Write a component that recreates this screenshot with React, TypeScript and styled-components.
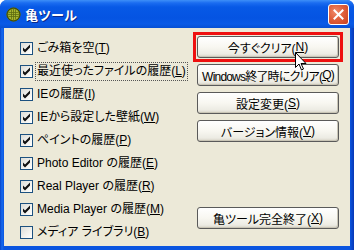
import React from "react";
import styled, { createGlobalStyle, css } from "styled-components";

const Global = createGlobalStyle`
  html, body { margin: 0; padding: 0; background: #ffffff; }
  body { font-family: "Liberation Sans", "Noto Sans CJK JP", sans-serif; }
`;

const Window = styled.div`
  position: relative;
  width: 354px;
  height: 250px;
  display: flex;
  flex-direction: column;
  background: linear-gradient(90deg, #0843c8 0px, #166aee 2px, #0a55e0 4px, #0a55e0 calc(100% - 4px), #0837b5 100%);
  border-radius: 7px 7px 0 0;
  overflow: hidden;
`;

const TitleBar = styled.div`
  height: 28px;
  flex: none;
  display: flex;
  align-items: center;
  padding: 0 5px 0 6px;
  background: linear-gradient(180deg, #3d8ff8 0px, #1a6cf0 3px, #0759e6 7px, #0554e2 18px, #0a5ae6 24px, #0650d4 28px);
  box-sizing: border-box;
`;

const AppIcon = styled.svg`
  width: 15px;
  height: 15px;
  flex: none;
`;

const Title = styled.span`
  margin-left: 4px;
  color: #ffffff;
  font-family: "Noto Sans CJK JP", sans-serif;
  font-weight: 700;
  font-size: 13px;
  text-shadow: 1px 1px 0 #0a2a8a;
  flex: 1;
`;

const CloseButton = styled.div`
  width: 21px;
  height: 21px;
  box-sizing: border-box;
  border: 1px solid #ffffff;
  border-radius: 3px;
  background: radial-gradient(circle at 35% 35%, #f08a6a 0%, #e0603c 45%, #c8401e 100%);
  display: flex;
  align-items: center;
  justify-content: center;
`;

const Client = styled.div`
  flex: 1;
  margin: 0 4px 4px;
  background: #ece9d8;
  display: flex;
`;

const LeftColumn = styled.div`
  width: 177px;
  padding: 9px 0 0 16px;
  display: flex;
  flex-direction: column;
`;

const RightColumn = styled.div`
  width: 142px;
  padding: 8px 0 17px 0;
  display: flex;
  flex-direction: column;
  gap: 6px;
`;

const Row = styled.label`
  height: 23px;
  display: flex;
  align-items: center;
  white-space: nowrap;
`;

const Box = styled.span`
  width: 13px;
  height: 13px;
  box-sizing: border-box;
  border: 1px solid #1c5180;
  background: linear-gradient(135deg, #dcdcd7 0%, #f3f3ef 60%, #ffffff 100%);
  display: flex;
  align-items: center;
  justify-content: center;
  flex: none;
`;

const Label = styled.span<{ $focused?: boolean }>`
  margin-left: 2px;
  padding: 1px 1px;
  font-size: 12px;
  line-height: 15px;
  color: #000000;
  font-feature-settings: "palt";
  border: 1px dotted transparent;
  ${(p) =>
    p.$focused &&
    css`
      border-color: #555555;
    `}
`;

const Key = styled.span`
  text-decoration: underline;
`;

const Button = styled.div<{ $highlighted?: boolean; $bottom?: boolean; $tight?: boolean }>`
  position: relative;
  height: 22px;
  box-sizing: border-box;
  border: 1px solid #5a5a5a;
  border-radius: 3px;
  background: linear-gradient(180deg, #ffffff 0%, #f8f7f1 50%, #ecebe3 85%, #d6d2c5 100%);
  box-shadow: inset -1px -1px 0 #c9c5b6;
  display: flex;
  align-items: center;
  justify-content: center;
  font-size: 12px;
  color: #000000;
  font-feature-settings: "palt";
  white-space: nowrap;
  ${(p) =>
    p.$tight &&
    css`
      letter-spacing: -0.8px;
    `}
  ${(p) =>
    p.$highlighted &&
    css`
      &::after {
        content: "";
        position: absolute;
        inset: -5px;
        border: 3px solid #ee1010;
      }
    `}
  ${(p) =>
    p.$bottom &&
    css`
      margin-top: auto;
    `}
`;

const Cursor = styled.svg`
  position: absolute;
  left: 295px;
  top: 52px;
  width: 12px;
  height: 19px;
`;

const items = [
  { label: "ごみ箱を空", key: "T", checked: true },
  { label: "最近使ったファイルの履歴", key: "L", checked: true, focused: true },
  { label: "IEの履歴", key: "I", checked: true },
  { label: "IEから設定した壁紙", key: "W", checked: true },
  { label: "ペイントの履歴", key: "P", checked: true },
  { label: "Photo Editor の履歴", key: "E", checked: true },
  { label: "Real Player の履歴", key: "R", checked: true },
  { label: "Media Player の履歴", key: "M", checked: true },
  { label: "メディア ライブラリ", key: "B", checked: false },
];

const buttons = [
  { label: "今すぐクリア", key: "N", highlighted: true },
  { label: "Windows終了時にクリア", key: "Q", tight: true },
  { label: "設定変更", key: "S" },
  { label: "バージョン情報", key: "V" },
  { label: "亀ツール完全終了", key: "X", bottom: true },
];

const Check = () => (
  <svg width="9" height="9" viewBox="0 0 9 9">
    <path d="M1 3.5 L3 5.5 L8 0.5 L8 3.5 L3 8.5 L1 6.5 Z" fill="#111111" />
  </svg>
);

export default function App() {
  return (
    <>
      <Global />
      <Window>
        <TitleBar>
          <AppIcon viewBox="0 0 15 15">
            <circle cx="7.5" cy="7.5" r="7" fill="#6f7d14" />
            <circle cx="7.5" cy="7.5" r="5.5" fill="#a8b630" />
            <path
              d="M2.5 5.5 H12.5 M2 7.5 H13 M2.5 9.5 H12.5 M5.5 2.5 V12.5 M7.5 2 V13 M9.5 2.5 V12.5"
              stroke="#5e6c12"
              strokeWidth="0.8"
            />
            <circle cx="7.5" cy="7.5" r="6.5" fill="none" stroke="#3f4a08" strokeWidth="1" />
          </AppIcon>
          <Title>亀ツール</Title>
          <CloseButton>
            <svg width="11" height="11" viewBox="0 0 11 11">
              <path d="M1.5 1.5 L9.5 9.5 M9.5 1.5 L1.5 9.5" stroke="#ffffff" strokeWidth="2" strokeLinecap="square" />
            </svg>
          </CloseButton>
        </TitleBar>
        <Client>
          <LeftColumn>
            {items.map((it) => (
              <Row key={it.key}>
                <Box>{it.checked && <Check />}</Box>
                <Label $focused={it.focused}>
                  {it.label}(<Key>{it.key}</Key>)
                </Label>
              </Row>
            ))}
          </LeftColumn>
          <RightColumn>
            {buttons.map((b) => (
              <Button key={b.key} $highlighted={b.highlighted} $bottom={b.bottom} $tight={b.tight}>
                {b.label}(<Key>{b.key}</Key>)
              </Button>
            ))}
          </RightColumn>
        </Client>
        <Cursor viewBox="0 0 12 19">
          <path d="M0.5 0.5 L0.5 15.5 L4 12 L6.5 18 L8.5 17 L6 11.5 L11 11.5 Z" fill="#ffffff" stroke="#000000" strokeWidth="1" strokeLinejoin="miter" />
        </Cursor>
      </Window>
    </>
  );
}
